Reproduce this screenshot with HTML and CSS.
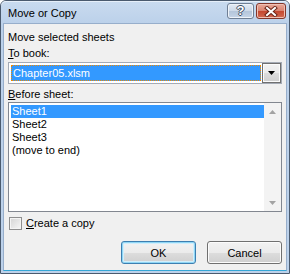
FILE: index.html
```html
<!DOCTYPE html>
<html lang="en">

<head>
    <meta charset="UTF-8">
    <meta name="viewport" content="width=device-width, initial-scale=1.0">
    <title>Move or Copy</title>
    <link rel="stylesheet" href="styles.css">
</head>

<body>
    <div class="window">
        <div class="titlebar">
            <span class="title">Move or Copy</span>
            <div class="caption-buttons">
                <span class="cap-btn help">?</span>
                <span class="cap-btn close">
                    <svg width="14" height="11" viewBox="0 0 14 11">
                        <path d="M3 2 L11 9 M11 2 L3 9" stroke="#6b2418" stroke-width="4" stroke-linecap="square" fill="none"/>
                        <path d="M3 2 L11 9 M11 2 L3 9" stroke="#fff" stroke-width="2" stroke-linecap="square" fill="none"/>
                    </svg>
                </span>
            </div>
        </div>
        <div class="content">
            <div class="label first">Move selected sheets</div>
            <div class="label gap-small"><u>T</u>o book:</div>
            <div class="combo">
                <div class="combo-value"><span>Chapter05.xlsm</span></div>
                <div class="combo-arrow">
                    <svg width="7" height="4" viewBox="0 0 7 4"><path d="M0 0 H7 L3.5 4 Z" fill="#000"/></svg>
                </div>
            </div>
            <div class="label gap-combo"><u>B</u>efore sheet:</div>
            <div class="listbox">
                <div class="items">
                    <div class="item selected">Sheet1</div>
                    <div class="item">Sheet2</div>
                    <div class="item">Sheet3</div>
                    <div class="item">(move to end)</div>
                </div>
                <div class="scrollbar">
                    <div class="scroll-btn">
                        <svg width="7" height="4" viewBox="0 0 7 4"><path d="M0 4 H7 L3.5 0 Z" fill="#a3a3a3"/></svg>
                    </div>
                    <div class="scroll-btn">
                        <svg width="7" height="4" viewBox="0 0 7 4"><path d="M0 0 H7 L3.5 4 Z" fill="#a3a3a3"/></svg>
                    </div>
                </div>
            </div>
            <label class="check">
                <span class="box"></span>
                <span><u>C</u>reate a copy</span>
            </label>
            <div class="buttons">
                <button type="button" class="btn default">OK</button>
                <button type="button" class="btn">Cancel</button>
            </div>
        </div>
    </div>
</body>

</html>
```

FILE: styles.css
```css
body {
    margin: 0;
    background: #fff;
    font-family: "Liberation Sans", Arial, sans-serif;
    font-size: 11px;
    color: #000;
}

.window {
    width: 290px;
    height: 274px;
    box-sizing: border-box;
    border: 1px solid #4a5a6e;
    border-radius: 6px 6px 0 0;
    background: linear-gradient(#c9dbef, #bcd1ea 22px, #bcd1ea);
    display: flex;
    flex-direction: column;
}

.titlebar {
    height: 22px;
    display: flex;
    justify-content: space-between;
    align-items: flex-start;
    padding: 0 3px 0 7px;
    border-radius: 5px 5px 0 0;
    box-shadow: inset 0 1px 0 #e6eff9;
}

.title {
    margin-top: 6px;
    line-height: 13px;
    font-size: 11px;
}

.caption-buttons {
    display: flex;
    gap: 2px;
    margin-top: 2px;
}

.cap-btn {
    height: 16px;
    box-sizing: border-box;
    border-radius: 3px;
    display: flex;
    align-items: center;
    justify-content: center;
}

.help {
    width: 27px;
    border: 1px solid #6f7f94;
    background: linear-gradient(#e3ebf5, #cdd9e8 50%, #b4c5da 51%, #c6d5e7);
    box-shadow: inset 0 0 0 1px #eef3f9;
    color: #fff;
    font-weight: bold;
    font-size: 13px;
    line-height: 14px;
    text-shadow: 1px 0 0 #3d4d62, -1px 0 0 #3d4d62, 0 1px 0 #3d4d62, 0 -1px 0 #3d4d62;
}

.close {
    width: 30px;
    border: 1px solid #83362a;
    background: linear-gradient(#e9a99a, #d8826f 50%, #c4472f 51%, #d26a52);
    box-shadow: inset 0 0 0 1px #efc0b4;
}

.content {
    flex: 1;
    margin: 0 2px 2px;
    border: 1px solid #97aecb;
    border-bottom-color: #34a6d6;
    background: #f0f0f0;
    padding: 7px 4px 6px;
    display: flex;
    flex-direction: column;
}

.label {
    line-height: 13px;
    height: 13px;
}

.gap-small {
    margin-top: 3px;
}

.gap-combo {
    margin-top: 4px;
}

.combo {
    margin-top: 2px;
    height: 22px;
    box-sizing: border-box;
    border: 1px solid #a5abb5;
    background: #fff;
    display: flex;
    align-items: stretch;
    padding-left: 2px;
}

.combo-value {
    width: 250px;
    margin: 2px 0;
    box-sizing: border-box;
    background: #3399ff;
    border: 1px dotted #f08a00;
    color: #fff;
    line-height: 14px;
    padding-left: 1px;
}

.combo-arrow {
    width: 19px;
    margin-left: 1px;
    box-sizing: border-box;
    border: 1px solid #707070;
    box-shadow: inset 0 0 0 1px #fbfbfb;
    background: linear-gradient(#f2f2f2, #ebebeb 50%, #dddddd 51%, #cfcfcf);
    display: flex;
    align-items: center;
    justify-content: center;
}

.listbox {
    margin-top: 1px;
    height: 110px;
    box-sizing: border-box;
    border: 1px solid #828790;
    background: #fff;
    display: flex;
}

.items {
    flex: 1;
    padding: 2px 0 0 2px;
}

.item {
    line-height: 13px;
    height: 13px;
    padding-left: 1px;
}

.item.selected {
    background: #3399ff;
    color: #fff;
}

.scrollbar {
    width: 17px;
    background: #f3f3f3;
    display: flex;
    flex-direction: column;
    justify-content: space-between;
}

.scroll-btn {
    height: 17px;
    display: flex;
    align-items: center;
    justify-content: center;
}

.check {
    margin-top: 5px;
    height: 13px;
    display: flex;
    align-items: center;
    gap: 4px;
    line-height: 13px;
}

.box {
    width: 13px;
    height: 13px;
    margin-left: 1px;
    box-sizing: border-box;
    border: 1px solid #8f8f8f;
    background: linear-gradient(135deg, #d4d4d4, #f7f7f7);
    box-shadow: inset 0 0 0 1px #f4f4f4;
}

.buttons {
    margin-top: 11px;
    display: flex;
    justify-content: flex-end;
    gap: 11px;
}

.btn {
    width: 75px;
    height: 23px;
    padding: 0;
    font-family: "Liberation Sans", Arial, sans-serif;
    font-size: 11px;
    color: #000;
    border: 1px solid #707070;
    border-radius: 3px;
    background: linear-gradient(#f2f2f2, #ebebeb 50%, #dddddd 51%, #cfcfcf);
    box-shadow: inset 0 0 0 1px #fcfcfc;
}

.btn.default {
    border-color: #3c7fb1;
    box-shadow: inset 0 0 0 1px #8fd6f5, inset 0 0 0 2px #d2eefb;
}
```
